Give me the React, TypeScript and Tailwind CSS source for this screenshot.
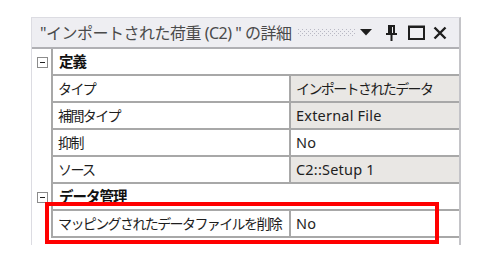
import React from 'react';

const jp = '[font-family:"Noto_Sans","Noto_Sans_CJK_JP",sans-serif]';

function Minus() {
  return (
    <div className="w-[11px] h-[11px] border border-[#8c8c8c] bg-white flex items-center justify-center">
      <div className="w-[5px] h-[1px] bg-[#222]" />
    </div>
  );
}

function Category({ label }: { label: string }) {
  return (
    <div className="flex h-[27px]">
      <div className="w-[19px] flex items-center justify-center pl-[2px]">
        <Minus />
      </div>
      <div className="flex-1 h-full border-l-2 border-b-2 border-[#a8a8a8] bg-white flex items-center pl-[6px]">
        <span className="text-[14.5px] font-bold text-[#111] tracking-[-1px]">{label}</span>
      </div>
    </div>
  );
}

function Row({ label, value, readOnly, jpValue }: { label: string; value: string; readOnly?: boolean; jpValue?: boolean }) {
  return (
    <div className="flex h-[27px]">
      <div className="w-[19px]" />
      <div className="w-[240px] h-full border-l-2 border-b-2 border-r-2 border-[#a8a8a8] bg-white flex items-center pl-[5px]">
        <span className="text-[14px] text-[#1e1e1e] tracking-[-1.6px] whitespace-nowrap">{label}</span>
      </div>
      <div className={`flex-1 h-full border-b-2 border-[#a8a8a8] flex items-center pl-[5px] ${readOnly ? 'bg-[#e9e7e4]' : 'bg-white'}`}>
        <span className={`whitespace-nowrap text-[#1e1e1e] ${jpValue ? 'text-[14px] tracking-[-1.6px]' : 'text-[14.5px] tracking-[0.2px]'}`}>{value}</span>
      </div>
    </div>
  );
}

export default function App() {
  return (
    <div className={`w-[490px] h-[265px] bg-white pt-[17px] pl-[31px] relative ${jp}`}>
      <div className="w-[430px] h-[228px] border-l border-t border-[#dcdce2] border-r-2 border-r-[#c4c4c8] flex flex-col">
        <div className="h-[31px] bg-[#eeeef2] border-b-2 border-[#b0b0b4] flex items-center pl-[8px] pr-[12px]">
          <span className="text-[16px] text-[#4a4a4a] tracking-[-0.5px] whitespace-nowrap pt-[1px]">"インポートされた荷重 (C2) " の詳細</span>
          <svg className="ml-auto" width="57" height="8" viewBox="0 0 57 8">
            <defs>
              <pattern id="grip" width="4" height="4" patternUnits="userSpaceOnUse">
                <rect x="0" y="0" width="1" height="1" fill="#b8b8c4" />
                <rect x="2" y="2" width="1" height="1" fill="#b8b8c4" />
              </pattern>
            </defs>
            <rect width="57" height="8" fill="url(#grip)" />
          </svg>
          <svg className="ml-[5px]" width="12" height="7" viewBox="0 0 12 7">
            <path d="M0 0 L12 0 L6 6.5 Z" fill="#1e1e1e" />
          </svg>
          <svg className="ml-[14px]" width="11" height="16" viewBox="0 0 11 16">
            <path d="M2 1 H9 M3 1 V9 M8 1 V9 M5 1 V9 M0 9 H11 M5.5 9 V16" stroke="#1e1e1e" strokeWidth="2" fill="none" />
          </svg>
          <svg className="ml-[11px]" width="17" height="15" viewBox="0 0 17 15">
            <rect x="1" y="1.5" width="15" height="12.5" stroke="#1e1e1e" strokeWidth="2" fill="none" />
            <rect x="1" y="1" width="15" height="2" fill="#1e1e1e" />
          </svg>
          <svg className="ml-[8px]" width="14" height="14" viewBox="0 0 14 14">
            <path d="M1.5 1.5 L12.5 12.5 M12.5 1.5 L1.5 12.5" stroke="#1e1e1e" strokeWidth="2.4" fill="none" />
          </svg>
        </div>
        <Category label="定義" />
        <Row label="タイプ" value="インポートされたデータ" readOnly jpValue />
        <Row label="補間タイプ" value="External File" readOnly />
        <Row label="抑制" value="No" />
        <Row label="ソース" value="C2::Setup 1" readOnly />
        <Category label="データ管理" />
        <Row label="マッピングされたデータファイルを削除" value="No" />
      </div>
      <div className="absolute left-[45px] top-[202px] w-[394px] h-[42px] border-[4px] border-[#ff0000]" />
    </div>
  );
}
